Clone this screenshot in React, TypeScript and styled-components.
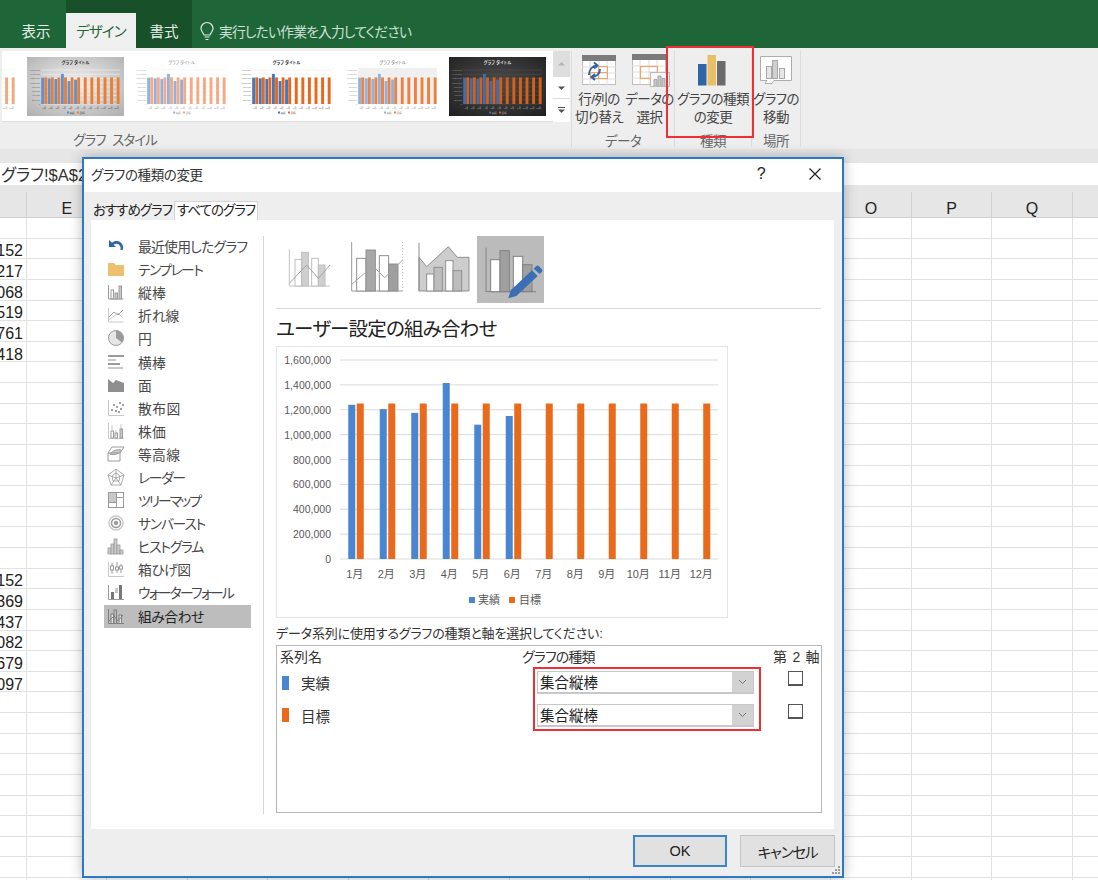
import React from 'react';
import styled, { createGlobalStyle } from 'styled-components';

const GlobalStyle = createGlobalStyle`
  html, body {
    margin: 0;
    padding: 0;
    background: #fff;
  }
  body {
    font-family: "Liberation Sans", "Noto Sans CJK JP", sans-serif;
    font-feature-settings: "palt";
    color: #222;
  }
  * {
    box-sizing: border-box;
  }
`;

const Page = styled.div`
  position: relative;
  width: 1098px;
  height: 880px;
  overflow: hidden;
  display: flex;
  flex-direction: column;
`;

/* ---------- title tabs ---------- */

const TabBar = styled.div`
  height: 48px;
  flex: none;
  background: #1e6538;
  display: flex;
  align-items: flex-end;
`;

const Tab = styled.div<{ $w: number; $active?: boolean; $pad?: number }>`
  width: ${p => p.$w}px;
  height: 35px;
  display: flex;
  align-items: center;
  justify-content: center;
  font-size: 14.5px;
  padding-left: ${p => p.$pad ?? 0}px;
  letter-spacing: ${p => (p.$active ? '-0.9px' : '0')};
  color: ${p => (p.$active ? '#1e6538' : '#e4eee7')};
  background: ${p => (p.$active ? '#f0f0f0' : 'transparent')};
`;

const ContextTabs = styled.div`
  height: 48px;
  display: flex;
  align-items: flex-end;
  background: #175029;
`;

const Hint = styled.div`
  height: 35px;
  margin-left: 7px;
  display: flex;
  align-items: center;
  gap: 4px;
  font-size: 13.8px;
  letter-spacing: -0.85px;
  color: #cfe0d5;
`;

/* ---------- ribbon ---------- */

const Ribbon = styled.div`
  height: 101px;
  flex: none;
  background: #eeeeee;
  display: flex;
  padding-top: 3px;
`;

const RibbonGroup = styled.div<{ $w: number }>`
  width: ${p => p.$w}px;
  height: 96px;
  flex: none;
  display: flex;
  flex-direction: column;
  border-right: 1px solid #dcdcdc;
`;

const GroupBody = styled.div`
  height: 79px;
  flex: none;
  display: flex;
  justify-content: center;
`;

const GroupLabel = styled.div<{ $w?: number }>`
  width: ${p => (p.$w ? `${p.$w}px` : 'auto')};
  text-align: center;
  font-size: 13.5px;
  line-height: 17px;
  letter-spacing: ${p => (p.$w ? '-1px' : '-0.6px')};
  word-spacing: 4px;
  color: #666;
  padding-top: ${p => (p.$w ? '2px' : '3px')};
`;

const Gallery = styled.div`
  width: 551px;
  height: 71px;
  flex: none;
  background: #fff;
  overflow: hidden;
  display: flex;
  gap: 8.5px;
  padding-top: 6px;
  border-bottom: 1px solid #dedede;
`;

const ThumbBox = styled.svg<{ $first?: boolean }>`
  width: 97px;
  height: 59px;
  flex: none;
  margin-left: ${p => (p.$first ? '-80px' : '0')};
`;

const GalleryScroll = styled.div`
  width: 17px;
  height: 71px;
  flex: none;
  display: flex;
  flex-direction: column;
  gap: 1px;
  background: #dcdcdc;
`;

const ScrollCell = styled.div<{ $h: number; $off?: boolean }>`
  height: ${p => p.$h}px;
  flex: none;
  display: flex;
  align-items: center;
  justify-content: center;
  background: ${p => (p.$off ? '#dedede' : '#fff')};
`;

const RibbonButton = styled.div<{ $w: number }>`
  width: ${p => p.$w}px;
  height: 79px;
  flex: none;
  display: flex;
  flex-direction: column;
  align-items: center;
  padding-top: 2px;
`;

const ButtonIcon = styled.svg`
  width: 40px;
  height: 34px;
  flex: none;
`;

const ButtonText = styled.div`
  margin-top: 4px;
  font-size: 13.5px;
  line-height: 18px;
  letter-spacing: -0.55px;
  color: #444;
  text-align: center;
  white-space: nowrap;
`;

const RedFrame = styled.div<{ $l: number; $t: number; $w: number; $h: number }>`
  position: absolute;
  left: ${p => p.$l}px;
  top: ${p => p.$t}px;
  width: ${p => p.$w}px;
  height: ${p => p.$h}px;
  border: 2px solid #ee3036;
  pointer-events: none;
`;

/* ---------- sheet ---------- */

const FormulaStrip = styled.div`
  height: 43px;
  flex: none;
  background: #e6e6e6;
  padding: 14px 0 7px;
`;

const FormulaInput = styled.div`
  height: 22px;
  background: #fff;
  padding-left: 1px;
  font-size: 16.5px;
  line-height: 25px;
  color: #333;
  white-space: nowrap;
  overflow: hidden;
`;

const SheetRow = styled.div<{ $head?: boolean }>`
  height: ${p => (p.$head ? '26px' : '20.64px')};
  flex: none;
  display: grid;
  grid-template-columns: 27px repeat(14, 80.45px);
  background: ${p => (p.$head ? '#e6e6e6' : '#fff')};
  border-bottom: 1px solid ${p => (p.$head ? '#d0d0d0' : '#e2e2e2')};
`;

const SheetCell = styled.div<{ $head?: boolean }>`
  border-right: 1px solid ${p => (p.$head ? '#cfcfcf' : '#e2e2e2')};
  font-size: 16px;
  line-height: 16px;
  color: #222;
  white-space: nowrap;
  overflow: hidden;
  display: flex;
  align-items: center;
  justify-content: ${p => (p.$head ? 'center' : 'flex-end')};
  padding-right: ${p => (p.$head ? '0' : '3px')};
  padding-top: ${p => (p.$head ? '9px' : '6px')};
`;

/* ---------- dialog ---------- */

const Dialog = styled.div`
  position: absolute;
  left: 82px;
  top: 157px;
  width: 762px;
  height: 721px;
  border: 2px solid #2b79c4;
  background: #eeeeee;
  box-shadow: 0 0 12px rgba(0, 0, 0, 0.28);
  display: flex;
  flex-direction: column;
`;

const TitleBar = styled.div`
  height: 33px;
  flex: none;
  background: #fff;
  display: flex;
  align-items: center;
  padding: 0 0 4px 7px;
  font-size: 13.5px;
  letter-spacing: -0.4px;
  color: #333;
`;

const TitleText = styled.div`
  flex: 1;
`;

const HelpMark = styled.div`
  width: 14px;
  text-align: center;
  font-size: 16px;
  color: #222;
  margin-right: 40px;
`;

const CloseMark = styled.svg`
  width: 14px;
  height: 14px;
  margin-right: 20px;
`;

const DialogTabs = styled.div`
  height: 28px;
  flex: none;
  display: flex;
  align-items: flex-end;
  padding-left: 9px;
  gap: 3px;
`;

const DialogTab = styled.div<{ $active?: boolean }>`
  height: 18px;
  font-size: 13.5px;
  line-height: 17px;
  letter-spacing: -1px;
  padding: 0 ${p => (p.$active ? '2px' : '0')};
  color: #222;
  background: ${p => (p.$active ? '#fff' : 'transparent')};
  outline: ${p => (p.$active ? '1px solid #d4d4d4' : 'none')};
`;

const Panel = styled.div`
  height: 609px;
  flex: none;
  margin: 0 8px 0 7px;
  background: #fff;
  display: flex;
  padding-top: 15.5px;
`;

const Sidebar = styled.div`
  width: 173px;
  height: 578px;
  flex: none;
  padding-left: 13px;
  border-right: 1px solid #d6d6d6;
`;

const SideItem = styled.div<{ $active?: boolean; $spacing: number }>`
  width: 147px;
  height: 23.1px;
  display: flex;
  align-items: center;
  gap: 13px;
  padding: 0 0 2px 3px;
  font-size: 13.8px;
  letter-spacing: ${p => p.$spacing}px;
  white-space: nowrap;
  color: ${p => (p.$active ? '#222' : '#484848')};
  background: ${p => (p.$active ? '#bdbdbd' : 'transparent')};
`;

const SideIcon = styled.svg`
  width: 18px;
  height: 18px;
  flex: none;
`;

const Main = styled.div`
  width: 545px;
  margin-left: 12px;
  display: flex;
  flex-direction: column;
`;

const TypeRow = styled.div`
  height: 73.5px;
  flex: none;
  display: flex;
  align-items: flex-start;
  border-bottom: 1px solid #d9d9d9;
`;

const TypeIcon = styled.svg<{ $active?: boolean }>`
  width: 67px;
  height: 67px;
  flex: none;
  background: ${p => (p.$active ? '#bbbbbb' : 'transparent')};
`;

const Heading = styled.div`
  height: 37px;
  flex: none;
  font-size: 19.5px;
  line-height: 40px;
  letter-spacing: -0.8px;
  color: #222;
`;

const ChartFrame = styled.svg`
  width: 452px;
  height: 272px;
  flex: none;
  display: block;
  border: 1px solid #e4e4e4;
`;

const SectionLabel = styled.div`
  height: 27px;
  flex: none;
  font-size: 13px;
  line-height: 31px;
  letter-spacing: -0.15px;
  color: #333;
  white-space: nowrap;
`;

const SeriesTable = styled.div`
  position: relative;
  width: 546px;
  height: 168px;
  flex: none;
  border: 1px solid #b8b8b8;
`;

const TableHead = styled.div`
  height: 25px;
  display: grid;
  grid-template-columns: 242px 251px 1fr;
  align-items: center;
  font-size: 14px;
  color: #333;
  padding: 0 0 6px 3px;
  white-space: nowrap;
`;

const HeadType = styled.div`
  letter-spacing: -0.9px;
`;

const HeadAxis = styled.div`
  word-spacing: 1.5px;
`;

const TableRow = styled.div`
  height: 32.5px;
  display: grid;
  grid-template-columns: 255px 217px 1fr;
  padding-left: 5px;
`;

const NameCell = styled.div`
  height: 23px;
  display: flex;
  align-items: center;
  gap: 12px;
  font-size: 14.5px;
  color: #333;
`;

const Swatch = styled.div<{ $c: string }>`
  width: 7px;
  height: 14px;
  background: ${p => p.$c};
`;

const Select = styled.div`
  height: 23px;
  display: flex;
  border: 1px solid #c8c8c8;
  border-bottom-width: 2px;
  font-size: 14.5px;
  color: #222;
`;

const SelectValue = styled.div`
  flex: 1;
  padding-left: 2px;
  line-height: 22px;
`;

const SelectArrow = styled.div`
  width: 21px;
  background: #d2d2d2;
  display: flex;
  align-items: center;
  justify-content: center;
`;

const CheckCell = styled.div`
  padding: 0 0 0 34px;
`;

const CheckBox = styled.div`
  width: 15px;
  height: 15px;
  background: #fff;
  border: 1px solid #555;
  border-bottom-width: 2px;
`;

const Footer = styled.div`
  position: relative;
  flex: 1;
  display: flex;
  justify-content: flex-end;
  gap: 13px;
  padding: 6px 7px 0 0;
`;

const DialogButton = styled.div<{ $primary?: boolean }>`
  width: ${p => (p.$primary ? '94px' : '95px')};
  height: 32px;
  display: flex;
  align-items: center;
  justify-content: center;
  background: #e1e1e1;
  border: ${p => (p.$primary ? '2px solid #3a85cc' : '1px solid #c4c4c4')};
  font-size: 14.5px;
  letter-spacing: ${p => (p.$primary ? '0' : '-1.2px')};
  color: #222;
`;

const Grip = styled.svg`
  position: absolute;
  right: 1px;
  bottom: 1px;
  width: 10px;
  height: 10px;
`;

/* ---------- data ---------- */

const MONTHS = ['1月', '2月', '3月', '4月', '5月', '6月', '7月', '8月', '9月', '10月', '11月', '12月'];
const ACTUAL = [1240000, 1205000, 1175000, 1415000, 1080000, 1150000];
const TARGET = 1250000;

const SHEET_VALUES: Record<number, string> = {
  1: '152', 2: '217', 3: '068', 4: '519', 5: '761', 6: '418',
  17: '152', 18: '369', 19: '437', 20: '082', 21: '679', 22: '097',
};

const GRAY = '#9b9b9b';
const LIGHT = '#c9c9c9';

const SIDE_ITEMS: { label: string; spacing: number; icon: React.ReactNode }[] = [
  {
    label: '最近使用したグラフ',
    spacing: -0.75,
    icon: (
      <path d="M2 3v7h7L6.6 7.7C8.5 6 12 6.5 13.2 9.2c.5 1.2.6 2.4.2 3.8h2.4c.8-2.6.2-5.2-1.6-7C11.6 3.400 7.500 3.400 5 5.800L2 3z" fill="#2f65a7" />
    ),
  },
  {
    label: 'テンプレート',
    spacing: -1.5,
    icon: <path d="M1 3h6l1.500 2H17v11H1z" fill="#ecc06c" />,
  },
  {
    label: '縦棒',
    spacing: 0.3,
    icon: (
      <g fill="none" stroke={GRAY}>
        <path d="M1.500 2v14h15" />
        <rect x="4" y="7" width="2.500" height="9" />
        <rect x="8" y="10" width="2.500" height="6" fill={LIGHT} />
        <rect x="12" y="3" width="2.500" height="13" fill={LIGHT} />
      </g>
    ),
  },
  {
    label: '折れ線',
    spacing: 0,
    icon: (
      <g fill="none" stroke={GRAY}>
        <path d="M1.500 2v14h15" stroke={LIGHT} />
        <path d="M2 11l5-5 4 3 5-5" />
        <path d="M2 14l5-4 4-3 5 5" stroke={LIGHT} />
      </g>
    ),
  },
  {
    label: '円',
    spacing: 0,
    icon: (
      <g>
        <circle cx="9" cy="9" r="7.500" fill="#e6e6e6" stroke={GRAY} />
        <path d="M9 1.500A7.500 7.500 0 0 1 15 13.500L9 9z" fill={GRAY} />
      </g>
    ),
  },
  {
    label: '横棒',
    spacing: 0.3,
    icon: (
      <g fill={GRAY}>
        <rect x="1" y="2" width="16" height="2" />
        <rect x="1" y="6" width="8" height="2" fill={LIGHT} />
        <rect x="1" y="10" width="12" height="2" />
        <rect x="1" y="14" width="15" height="2" fill={LIGHT} />
      </g>
    ),
  },
  {
    label: '面',
    spacing: 0,
    icon: <path d="M1 3l5 4 3-3 8 3v9H1z" fill="#8f8f8f" />,
  },
  {
    label: '散布図',
    spacing: 0.4,
    icon: (
      <g fill="#777">
        <path d="M1.500 1v15.500H17" fill="none" stroke={LIGHT} />
        <circle cx="5" cy="11" r="0.900" />
        <circle cx="7" cy="6" r="0.900" />
        <circle cx="9" cy="12" r="0.900" />
        <circle cx="10" cy="8" r="0.900" />
        <circle cx="13" cy="4" r="0.900" />
        <circle cx="14" cy="10" r="0.900" />
        <circle cx="16" cy="6" r="0.900" />
        <circle cx="12" cy="13" r="0.900" />
      </g>
    ),
  },
  {
    label: '株価',
    spacing: 0.3,
    icon: (
      <g fill="none" stroke={GRAY}>
        <path d="M1.500 1v15.500H17" stroke={LIGHT} />
        <path d="M5 3v5M9 8v6M14 2v8" stroke={LIGHT} />
        <rect x="4" y="9" width="2.500" height="7" />
        <rect x="8" y="11" width="2.500" height="5" />
        <rect x="13" y="7" width="2.500" height="9" fill={LIGHT} />
      </g>
    ),
  },
  {
    label: '等高線',
    spacing: 0.3,
    icon: (
      <g fill="none" stroke={GRAY}>
        <path d="M5 2h12l-4 6v8H1V8z" />
        <path d="M3 9c3-4 8-5 11-4-1 3-6 6-11 4z" fill={LIGHT} />
        <path d="M1 8h12" />
      </g>
    ),
  },
  {
    label: 'レーダー',
    spacing: -1.3,
    icon: (
      <g fill="none" stroke={GRAY} strokeWidth="0.800">
        <path d="M9 1l8 6-3 10H4L1 7z" />
        <path d="M9 1v9M1 7l8 3 8-3M4 17l5-7 5 7" />
        <path d="M9 5l4 3-1 5H6L5 8z" />
      </g>
    ),
  },
  {
    label: 'ツリーマップ',
    spacing: -1.9,
    icon: (
      <g stroke={GRAY} fill="none">
        <rect x="1.500" y="1.500" width="15" height="15" />
        <rect x="1.500" y="1.500" width="8" height="10" fill={LIGHT} />
        <path d="M9.500 6.500h7M9.500 11.500v5" />
      </g>
    ),
  },
  {
    label: 'サンバースト',
    spacing: -1.2,
    icon: (
      <g fill="none" stroke={GRAY}>
        <circle cx="9" cy="9" r="7" strokeWidth="1.500" stroke={LIGHT} />
        <circle cx="9" cy="9" r="4.500" strokeWidth="1.500" />
        <circle cx="9" cy="9" r="1.800" fill={GRAY} />
      </g>
    ),
  },
  {
    label: 'ヒストグラム',
    spacing: -1.2,
    icon: (
      <g fill={LIGHT} stroke={GRAY} strokeWidth="0.800">
        <rect x="1" y="11" width="3" height="6" />
        <rect x="4" y="7" width="3" height="10" />
        <rect x="7" y="2" width="3" height="15" />
        <rect x="10" y="8" width="3" height="9" />
        <rect x="13" y="13" width="3" height="4" />
      </g>
    ),
  },
  {
    label: '箱ひげ図',
    spacing: -0.4,
    icon: (
      <g fill="none" stroke={GRAY}>
        <path d="M1.500 2v14.500H17" stroke={LIGHT} />
        <path d="M5 3v11M10 2v11M14 4v9" />
        <rect x="3.500" y="6" width="3" height="4" fill="#fff" />
        <rect x="8.500" y="7" width="3" height="3" fill="#fff" />
        <rect x="12.500" y="6" width="3" height="3" fill="#fff" />
      </g>
    ),
  },
  {
    label: 'ウォーターフォール',
    spacing: -1.7,
    icon: (
      <g>
        <path d="M1.500 2v14.500H17" fill="none" stroke={GRAY} />
        <rect x="4" y="9" width="3" height="7" fill="#777" />
        <rect x="8" y="5" width="3" height="5" fill={LIGHT} />
        <rect x="12" y="2" width="3" height="14" fill="#777" />
      </g>
    ),
  },
  {
    label: '組み合わせ',
    spacing: -0.5,
    icon: (
      <g fill="none" stroke="#808080">
        <path d="M1.500 2v14.500H17" />
        <rect x="4" y="7" width="2.500" height="9.500" fill="#e2e2e2" />
        <rect x="7" y="3" width="2.500" height="13.500" />
        <rect x="12" y="8" width="2.500" height="8.500" fill="#e2e2e2" />
        <path d="M2 14l5-5 4 5 5-6" />
      </g>
    ),
  },
];

const THUMBS = [
  { plain: '#fff', blue: '#6d9fd8', orange: '#f4a77a', title: '#777', text: '#999', grid: '#eee', bold: false },
  { plain: 'url(#silver)', blue: '#5b93d3', orange: '#ed7d31', title: '#333', text: '#555', grid: '#f4f4f4', bold: true },
  { plain: '#fff', blue: '#8db3e2', orange: '#f6a983', title: '#888', text: '#999', grid: '#eee', bold: false },
  { plain: '#fff', blue: '#3f78c3', orange: '#e8681b', title: '#333', text: '#666', grid: '#e6e6e6', bold: true },
  { plain: '#fff', blue: '#8db3e2', orange: '#ee8140', title: '#666', text: '#888', grid: '#eee', bold: false, dotted: true },
  { plain: 'url(#coal)', blue: '#3a70b5', orange: '#d95f14', title: '#ddd', text: '#aaa', grid: '#555', bold: true },
];

/* ---------- drawings ---------- */

const Thumb: React.FC<{ index: number }> = ({ index }) => {
  const t = THUMBS[index];
  const left = 14;
  const width = 79;
  const base = 47;
  const scale = 34 / 1600000;
  const step = width / 12;
  return (
    <ThumbBox viewBox="0 0 97 59" $first={index === 0}>
      <defs>
        <radialGradient id="silver" cx="50%" cy="45%" r="70%">
          <stop offset="0" stopColor="#f1f1f1" />
          <stop offset="1" stopColor="#b2b2b2" />
        </radialGradient>
        <radialGradient id="coal" cx="50%" cy="45%" r="70%">
          <stop offset="0" stopColor="#4c4c4c" />
          <stop offset="1" stopColor="#222" />
        </radialGradient>
      </defs>
      <rect width="97" height="59" fill={t.plain} />
      {t.dotted && <rect x={left} y="11" width={width} height="36" fill="#f0f0f0" />}
      <text
        x="48.500"
        y="7"
        textAnchor="middle"
        fontSize="4.200"
        fontWeight={t.bold ? 700 : 400}
        fill={t.title}
      >
        グラフ タイトル
      </text>
      {[0, 1, 2, 3, 4, 5, 6, 7, 8].map(i => (
        <g key={i}>
          <line x1={left} x2={left + width} y1={base - i * 4.25} y2={base - i * 4.25} stroke={t.grid} strokeWidth="0.500" />
          <text x={left - 1} y={base - i * 4.25 + 0.8} textAnchor="end" fontSize="2.200" fill={t.text}>
            {(i * 200000).toLocaleString('en-US')}
          </text>
        </g>
      ))}
      {MONTHS.map((m, i) => {
        const x = left + step * i;
        return (
          <g key={m}>
            {ACTUAL[i] !== undefined && (
              <rect x={x + 0.2} y={base - ACTUAL[i] * scale} width="2.900" height={ACTUAL[i] * scale} fill={t.blue} />
            )}
            <rect x={x + 3.300} y={base - TARGET * scale} width="2.900" height={TARGET * scale} fill={t.orange} />
            <text x={x + 3.300} y="51.500" textAnchor="middle" fontSize="2.400" fill={t.text}>
              {m}
            </text>
          </g>
        );
      })}
      <rect x="40" y="54.500" width="2" height="2" fill={t.blue} />
      <text x="42.500" y="56.500" fontSize="2.600" fill={t.text}>実績</text>
      <rect x="50" y="54.500" width="2" height="2" fill={t.orange} />
      <text x="52.500" y="56.500" fontSize="2.600" fill={t.text}>目標</text>
    </ThumbBox>
  );
};

const MainChart: React.FC = () => {
  const left = 63;
  const right = 441;
  const base = 212;
  const unit = 199 / 1600000;
  const step = (right - left) / 12;
  const axis = [0, 1, 2, 3, 4, 5, 6, 7, 8];
  return (
    <ChartFrame viewBox="0 0 450 270">
      {axis.map(i => {
        const y = base - i * 24.875;
        return (
          <g key={i}>
            <line x1={left} x2={right} y1={y} y2={y} stroke="#dadada" />
            <text x="54" y={y + 4} textAnchor="end" fontSize="10.500" fill="#595959">
              {(i * 200000).toLocaleString('en-US')}
            </text>
          </g>
        );
      })}
      {MONTHS.map((m, i) => {
        const c = left + step * (i + 0.5);
        return (
          <g key={m}>
            {ACTUAL[i] !== undefined && (
              <rect x={c - 7.500} y={base - ACTUAL[i] * unit} width="7" height={ACTUAL[i] * unit} fill="#4a86d0" />
            )}
            <rect x={c + 1} y={base - TARGET * unit} width="7" height={TARGET * unit} fill="#ea6a1c" />
            <text x={c - 1} y="231" textAnchor="middle" fontSize="11" fill="#595959">
              {m}
            </text>
          </g>
        );
      })}
      <rect x="192" y="250" width="6" height="6" fill="#4a86d0" />
      <text x="201" y="257" fontSize="11" fill="#595959">実績</text>
      <rect x="232" y="250" width="6" height="6" fill="#ea6a1c" />
      <text x="242" y="257" fontSize="11" fill="#595959">目標</text>
    </ChartFrame>
  );
};

const ChevronDown: React.FC = () => (
  <svg width="9" height="6" viewBox="0 0 9 6">
    <path d="M1 1l3.500 3.500L8 1" fill="none" stroke="#777" />
  </svg>
);

const ScrollArrow: React.FC<{ up?: boolean; more?: boolean; color?: string }> = ({ up, more, color = '#555' }) => (
  <svg width="9" height="9" viewBox="0 0 9 9">
    {more && <rect x="1" y="1" width="7" height="1" fill={color} />}
    <path d={up ? 'M4.500 3L8 6.500H1z' : 'M1 3.500h7L4.500 7z'} fill={color} />
  </svg>
);

const App: React.FC = () => {
  return (
    <Page>
      <GlobalStyle />
      <TabBar>
        <Tab $w={66} $pad={6}>表示</Tab>
        <ContextTabs>
          <Tab $w={70} $active>デザイン</Tab>
          <Tab $w={56}>書式</Tab>
        </ContextTabs>
        <Hint>
          <svg width="16" height="20" viewBox="0 0 16 20">
            <path
              d="M8 1.500a6 6 0 0 0-6 6c0 2.500 2 3.800 3 6.500h6c1-2.700 3-4 3-6.500a6 6 0 0 0-6-6zM5.500 16h5M6.500 18.500h3"
              fill="none"
              stroke="#dfeae3"
              strokeWidth="1.200"
            />
          </svg>
          実行したい作業を入力してください
        </Hint>
      </TabBar>

      <Ribbon>
        <RibbonGroup $w={572}>
          <GroupBody>
            <Gallery>
              {THUMBS.map((_, i) => (
                <Thumb key={i} index={i} />
              ))}
            </Gallery>
            <GalleryScroll>
              <ScrollCell $h={25} $off>
                <ScrollArrow up color="#b5b5b5" />
              </ScrollCell>
              <ScrollCell $h={21}>
                <ScrollArrow />
              </ScrollCell>
              <ScrollCell $h={23}>
                <ScrollArrow more />
              </ScrollCell>
            </GalleryScroll>
          </GroupBody>
          <GroupLabel $w={230}>グラフ スタイル</GroupLabel>
        </RibbonGroup>

        <RibbonGroup $w={103}>
          <GroupBody>
            <RibbonButton $w={53}>
              <ButtonIcon viewBox="0 0 40 34">
                <rect x="3.500" y="2.500" width="33" height="29" fill="#fff" stroke="#bdbdbd" />
                <rect x="3" y="2" width="34" height="6" fill="#7b7b7b" />
                <path d="M3 14h34M3 20h34M3 26h34M11 8v24M20 8v24M28 8v24" stroke="#dcdcdc" />
                <rect x="19.500" y="13.500" width="9" height="12" fill="none" stroke="#f0a468" />
                <rect x="11.500" y="19.500" width="17" height="6" fill="none" stroke="#f0a468" />
                <path d="M10 22c0-5 3-9 8-9.500M15 9.500l3.500 3-3.500 3M21 16c0 5-4 8-8 8M16 21l-3.500 3 3.500 3" fill="none" stroke="#2f65a7" strokeWidth="2" />
              </ButtonIcon>
              <ButtonText>行/列の<br />切り替え</ButtonText>
            </RibbonButton>
            <RibbonButton $w={48}>
              <ButtonIcon viewBox="0 0 40 34">
                <rect x="2.500" y="2.500" width="33" height="29" fill="#fff" stroke="#bdbdbd" />
                <rect x="2" y="1" width="34" height="6" fill="#7b7b7b" />
                <path d="M2 13h34M2 19h34M2 25h34M10 7v24M19 7v24M27 7v24" stroke="#dcdcdc" />
                <rect x="10.500" y="13.500" width="17" height="12" fill="none" stroke="#f0a468" strokeWidth="1.200" />
                <rect x="20.500" y="19.500" width="19" height="14" fill="#f7f7f7" stroke="#bbb" />
                <path d="M24 33.500v-7h3v7M28 33.500V23h3v10.500M32 33.500v-8h3v8" fill={LIGHT} stroke={GRAY} strokeWidth="0.800" />
              </ButtonIcon>
              <ButtonText>データの<br />選択</ButtonText>
            </RibbonButton>
          </GroupBody>
          <GroupLabel>データ</GroupLabel>
        </RibbonGroup>

        <RibbonGroup $w={77}>
          <GroupBody>
            <RibbonButton $w={76}>
              <ButtonIcon viewBox="0 0 40 34">
                <rect x="5" y="11" width="8.500" height="21.500" fill="#2f65a7" />
                <rect x="14.500" y="2" width="8.500" height="30.500" fill="#e9bf66" />
                <rect x="24" y="8" width="8.500" height="24.500" fill="#6b6b6b" />
              </ButtonIcon>
              <ButtonText>グラフの種類<br />の変更</ButtonText>
            </RibbonButton>
          </GroupBody>
          <GroupLabel>種類</GroupLabel>
        </RibbonGroup>

        <RibbonGroup $w={49}>
          <GroupBody>
            <RibbonButton $w={48}>
              <ButtonIcon viewBox="0 0 40 34">
                <path d="M4.500 3.500h31v24H18l-2 3h-7l2-3H4.500z" fill="#fff" stroke="#adadad" />
                <rect x="10.500" y="13.500" width="5" height="12" fill="#e6e6e6" stroke="#a8a8a8" />
                <rect x="16.500" y="7.500" width="5" height="18" fill="#cfcfcf" stroke="#a8a8a8" />
                <rect x="23.500" y="15.500" width="5" height="10" fill="#e6e6e6" stroke="#a8a8a8" />
              </ButtonIcon>
              <ButtonText>グラフの<br />移動</ButtonText>
            </RibbonButton>
          </GroupBody>
          <GroupLabel>場所</GroupLabel>
        </RibbonGroup>
      </Ribbon>

      <FormulaStrip>
        <FormulaInput>グラフ!$A$2</FormulaInput>
      </FormulaStrip>

      <SheetRow $head>
        {['', 'E', '', '', '', '', '', '', '', '', '', 'O', 'P', 'Q', ''].map((c, i) => (
          <SheetCell key={i} $head>{c}</SheetCell>
        ))}
      </SheetRow>
      {Array.from({ length: 33 }, (_, r) => (
        <SheetRow key={r}>
          {Array.from({ length: 15 }, (_, c) => (
            <SheetCell key={c}>{c === 0 ? SHEET_VALUES[r] : ''}</SheetCell>
          ))}
        </SheetRow>
      ))}

      <RedFrame $l={666} $t={46} $w={88} $h={92} />

      <Dialog>
        <TitleBar>
          <TitleText>グラフの種類の変更</TitleText>
          <HelpMark>?</HelpMark>
          <CloseMark viewBox="0 0 14 14">
            <path d="M1.500 1.500l11 11M12.500 1.500l-11 11" stroke="#222" strokeWidth="1.200" />
          </CloseMark>
        </TitleBar>
        <DialogTabs>
          <DialogTab>おすすめグラフ</DialogTab>
          <DialogTab $active>すべてのグラフ</DialogTab>
        </DialogTabs>
        <Panel>
          <Sidebar>
            {SIDE_ITEMS.map((item, i) => (
              <SideItem key={item.label} $spacing={item.spacing} $active={i === SIDE_ITEMS.length - 1}>
                <SideIcon viewBox="0 0 18 18">{item.icon}</SideIcon>
                {item.label}
              </SideItem>
            ))}
          </Sidebar>
          <Main>
            <TypeRow>
              <TypeIcon viewBox="0 0 201 201">
                <path d="M40 40v110h122" fill="none" stroke="#c4c4c4" strokeWidth="3" />
                <rect x="57" y="70" width="20" height="80" fill="#fff" stroke="#bdbdbd" strokeWidth="3" />
                <rect x="77" y="49" width="20" height="101" fill="#cfcfcf" stroke="#bdbdbd" strokeWidth="3" />
                <rect x="107" y="67" width="20" height="83" fill="#fff" stroke="#bdbdbd" strokeWidth="3" />
                <rect x="127" y="87" width="20" height="63" fill="#cfcfcf" stroke="#bdbdbd" strokeWidth="3" />
                <path d="M40 142l52-55 35 40 35-40" fill="none" stroke="#a3a3a3" strokeWidth="3" />
              </TypeIcon>
              <TypeIcon viewBox="0 0 201 201">
                <path d="M26 18v147h153" fill="none" stroke="#9a9a9a" strokeWidth="3" />
                <path d="M179 18v147" fill="none" stroke="#bcbcbc" strokeWidth="3" strokeDasharray="3 6" />
                <rect x="41" y="67" width="28" height="98" fill="#fff" stroke="#8f8f8f" strokeWidth="3" />
                <rect x="69" y="42" width="28" height="123" fill="#a8a8a8" stroke="#8f8f8f" strokeWidth="3" />
                <rect x="109" y="59" width="28" height="106" fill="#fff" stroke="#8f8f8f" strokeWidth="3" />
                <rect x="137" y="84" width="28" height="81" fill="#a0a0a0" stroke="#8f8f8f" strokeWidth="3" />
                <path d="M26 145l64-55 35 35 54-53" fill="none" stroke="#a5a5a5" strokeWidth="3" />
              </TypeIcon>
              <TypeIcon viewBox="0 0 201 201">
                <path d="M27 64l23 28 65-60 27 32h35v101H27z" fill="#cdcdcd" stroke="#8f8f8f" strokeWidth="3" />
                <rect x="50" y="114" width="22" height="51" fill="#fff" stroke="#8f8f8f" strokeWidth="3" />
                <rect x="72" y="94" width="25" height="71" fill="#bdbdbd" stroke="#8f8f8f" strokeWidth="3" />
                <rect x="107" y="74" width="22" height="91" fill="#fff" stroke="#8f8f8f" strokeWidth="3" />
                <rect x="129" y="104" width="26" height="61" fill="#bdbdbd" stroke="#8f8f8f" strokeWidth="3" />
                <path d="M27 20v145" fill="none" stroke="#8f8f8f" strokeWidth="3" />
              </TypeIcon>
              <TypeIcon viewBox="0 0 201 201" $active>
                <path d="M27 35v132h150" fill="none" stroke="#828282" strokeWidth="3" />
                <rect x="41" y="71" width="28" height="96" fill="#fff" stroke="#808080" strokeWidth="3" />
                <rect x="69" y="44" width="28" height="123" fill="#a0a0a0" stroke="#808080" strokeWidth="3" />
                <rect x="109" y="61" width="28" height="106" fill="#fff" stroke="#808080" strokeWidth="3" />
                <rect x="137" y="86" width="28" height="81" fill="#a0a0a0" stroke="#808080" strokeWidth="3" />
                <path d="M94 187l7-24 64-60 17 17-64 60zM170 98l7-7c3-3 6-3 9 0l8 8c3 3 3 6 0 9l-6 6z" fill="#3a6fb5" />
              </TypeIcon>
            </TypeRow>
            <Heading>ユーザー設定の組み合わせ</Heading>
            <MainChart />
            <SectionLabel>データ系列に使用するグラフの種類と軸を選択してください:</SectionLabel>
            <SeriesTable>
              <TableHead>
                <div>系列名</div>
                <HeadType>グラフの種類</HeadType>
                <HeadAxis>第 2 軸</HeadAxis>
              </TableHead>
              <TableRow>
                <NameCell><Swatch $c="#4a86d0" />実績</NameCell>
                <Select>
                  <SelectValue>集合縦棒</SelectValue>
                  <SelectArrow><ChevronDown /></SelectArrow>
                </Select>
                <CheckCell><CheckBox /></CheckCell>
              </TableRow>
              <TableRow>
                <NameCell><Swatch $c="#ea6a1c" />目標</NameCell>
                <Select>
                  <SelectValue>集合縦棒</SelectValue>
                  <SelectArrow><ChevronDown /></SelectArrow>
                </Select>
                <CheckCell><CheckBox /></CheckCell>
              </TableRow>
              <RedFrame $l={256} $t={21} $w={228} $h={64} />
            </SeriesTable>
          </Main>
        </Panel>
        <Footer>
          <DialogButton $primary>OK</DialogButton>
          <DialogButton>キャンセル</DialogButton>
          <Grip viewBox="0 0 10 10">
            <g fill="#9a9a9a">
              <rect x="7" y="1" width="2" height="2" />
              <rect x="4" y="4" width="2" height="2" />
              <rect x="7" y="4" width="2" height="2" />
              <rect x="1" y="7" width="2" height="2" />
              <rect x="4" y="7" width="2" height="2" />
              <rect x="7" y="7" width="2" height="2" />
            </g>
          </Grip>
        </Footer>
      </Dialog>
    </Page>
  );
};

export default App;
